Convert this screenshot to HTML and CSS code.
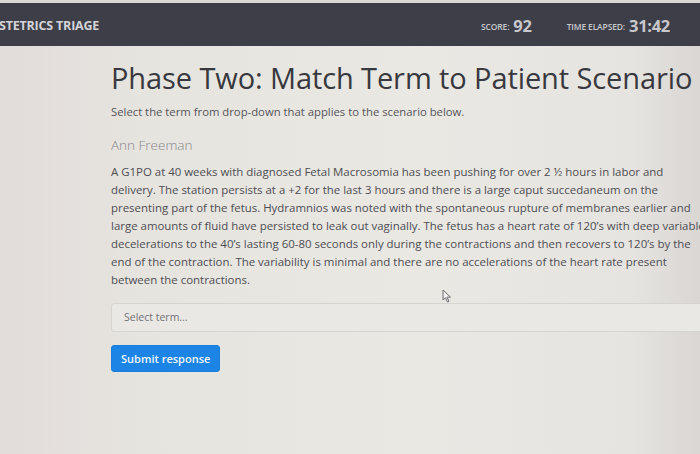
FILE: index.html
```html
<!DOCTYPE html>
<html>
<head>
<meta charset="utf-8">
<link rel="stylesheet" href="styles.css">
</head>
<body>
<div class="topstrip"></div>
<header class="bar">
  <div class="brand">STETRICS TRIAGE</div>
  <div class="stats">
    <div class="stat"><span class="label">SCORE:</span><span class="value">92</span></div>
    <div class="stat"><span class="label">TIME ELAPSED:</span><span class="value">31:42</span></div>
  </div>
</header>
<main class="content">
  <h1 class="title">Phase Two: Match Term to Patient Scenario</h1>
  <p class="lead">Select the term from drop-down that applies to the scenario below.</p>
  <h2 class="patient">Ann Freeman</h2>
  <p class="scenario">A G1PO at 40 weeks with diagnosed Fetal Macrosomia has been pushing for over 2 ½ hours in labor and<br>delivery. The station persists at a +2 for the last 3 hours and there is a large caput succedaneum on the<br>presenting part of the fetus. Hydramnios was noted with the spontaneous rupture of membranes earlier and<br>large amounts of fluid have persisted to leak out vaginally. The fetus has a heart rate of 120’s with deep variable<br>decelerations to the 40’s lasting 60-80 seconds only during the contractions and then recovers to 120’s by the<br>end of the contraction. The variability is minimal and there are no accelerations of the heart rate present<br>between the contractions.</p>
  <div class="select">Select term...</div>
  <button class="submit">Submit response</button>
</main>
<svg class="cursor" width="10" height="14" viewBox="0 0 10 14">
  <path d="M1 1 L1 11 L3.5 8.8 L5.5 13 L7 12.3 L5 8.2 L8.5 8.2 Z" fill="#f0efec" stroke="#6e6e74" stroke-width="1" stroke-linejoin="round"/>
</svg>
</body>
</html>
```
FILE: styles.css
```css
html, body {
  margin: 0;
  padding: 0;
}
body {
  position: relative;
  width: 700px;
  height: 454px;
  overflow: hidden;
  background: linear-gradient(90deg, #e2dcda 0%, #e6e4df 20%, #e9e8e3 60%, #e6e4e0 90%, #d9d6d4 100%);
  font-family: "Open Sans", "Noto Sans", sans-serif;
  color: #4a4a4e;
}
.topstrip {
  height: 3px;
  background: #dcd8d6;
}
.bar {
  height: 43px;
  background: #3e3e48;
  display: flex;
  align-items: center;
  justify-content: space-between;
  padding-right: 30px;
}
.brand {
  color: #d4d4d8;
  font-weight: 700;
  font-size: 12.5px;
  letter-spacing: -0.2px;
  margin-left: -1px;
  padding-top: 2px;
}
.stats {
  display: flex;
  align-items: center;
  gap: 35px;
  color: #c8c8cc;
  padding-top: 2px;
}
.stat {
  display: flex;
  align-items: center;
  gap: 4px;
}
.label {
  font-size: 8.5px;
  font-weight: 600;
  letter-spacing: -0.15px;
  padding-top: 1px;
}
.value {
  font-size: 16.5px;
  font-weight: 700;
  letter-spacing: -0.3px;
}
.content {
  padding-left: 111px;
  width: 600px;
}
.title {
  margin: 12px 0 0 0;
  font-size: 29px;
  font-weight: 400;
  color: #38383f;
  letter-spacing: -0.1px;
  line-height: 40px;
  white-space: nowrap;
}
.lead {
  margin: 7px 0 0 0;
  font-size: 11.3px;
  color: #555559;
  line-height: 14px;
}
.patient {
  margin: 16px 0 0 0;
  font-size: 13.5px;
  font-weight: 300;
  color: #86868a;
  line-height: 20px;
}
.scenario {
  margin: 8px 0 0 0;
  font-size: 11.45px;
  line-height: 18px;
  color: #4d4d52;
  width: 620px;
  white-space: nowrap;
}
.select {
  margin-top: 14px;
  height: 29px;
  width: 600px;
  box-sizing: border-box;
  border: 1px solid #d6d4d0;
  border-radius: 3px;
  background: #e9e8e4;
  font-size: 10.5px;
  color: #727276;
  padding: 6px 0 0 12px;
}
.submit {
  display: block;
  margin-top: 13px;
  height: 27px;
  padding: 0 9px;
  background: #1b84e4;
  color: #f2f6fb;
  border: 1px solid #1a7fdc;
  border-radius: 3px;
  font-family: "Open Sans", "Noto Sans", sans-serif;
  font-size: 11px;
  font-weight: 600;
}
.cursor {
  position: absolute;
  left: 442px;
  top: 289px;
}
```
